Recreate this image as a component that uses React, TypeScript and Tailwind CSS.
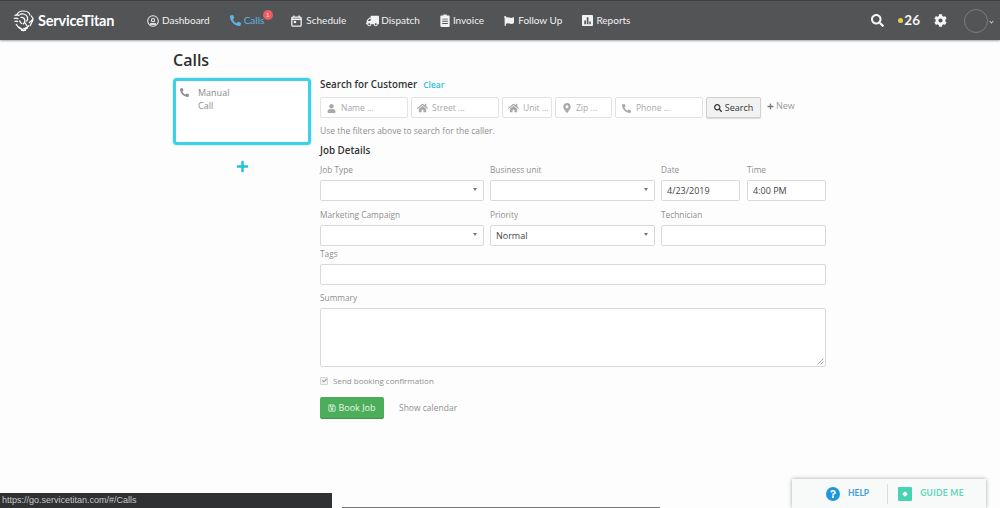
import type { ReactNode } from 'react';
import { FaCog, FaFlag, FaHome, FaMapMarkerAlt, FaPhoneAlt, FaPlus, FaQuestion, FaRegSave, FaSearch, FaTruck, FaUser, FaCheck } from 'react-icons/fa';

function DashIcon() {
  return (
    <svg width="12" height="12" viewBox="0 0 14 14" fill="none" stroke="currentColor" strokeWidth="1.2">
      <circle cx="7" cy="7" r="6.200" />
      <circle cx="7" cy="6" r="1.800" />
      <path d="M3.500 10.500h7" strokeWidth="2" />
    </svg>
  );
}

function CalIcon() {
  return (
    <svg width="11" height="12" viewBox="0 0 12 13" fill="none" stroke="currentColor">
      <rect x="0.900" y="2.200" width="10.200" height="9.900" rx="1" strokeWidth="1.400" />
      <path d="M1 4.600h10" strokeWidth="1.800" />
      <path d="M3.200 0.500v2.200M8.800 0.500v2.200" strokeWidth="1.400" />
      <rect x="3" y="6.400" width="2.600" height="2.400" fill="currentColor" stroke="none" />
    </svg>
  );
}

function InvoiceIcon() {
  return (
    <svg width="10" height="13" viewBox="0 0 10 14">
      <path fill="currentColor" fillRule="evenodd" d="M1 1.600h2.200V.6h3.600v1H9c.5 0 1 .4 1 1V13c0 .5-.5 1-1 1H1c-.5 0-1-.5-1-1V2.600c0-.6.5-1 1-1zM2 5v1h6V5zm0 2.400v1h6v-1zm0 2.400v1h6v-1z" />
    </svg>
  );
}

function ReportsIcon() {
  return (
    <svg width="11" height="11" viewBox="0 0 12 12">
      <path fill="currentColor" fillRule="evenodd" d="M1 0h10c.6 0 1 .4 1 1v10c0 .6-.4 1-1 1H1c-.6 0-1-.4-1-1V1c0-.6.4-1 1-1zm1.500 6v4h1.800V6zm2.700-3.500V10H7V2.500zM7.900 7v3h1.700V7z" />
    </svg>
  );
}

function Logo() {
  return (
    <svg width="21" height="22" viewBox="0 0 21 22" fill="none" stroke="white" strokeWidth="1.200">
      <path d="M3.500 5.500C4.500 2.500 7.500.8 11 1c3.500.2 5.800 2 6 4.500" />
      <path d="M1.500 5.500c1.800-.8 3.500-.7 5 .3M.8 8.500c1.800-.7 3.300-.5 4.500.4M1.500 11.500c1.300-.6 2.500-.5 3.700.3" />
      <path d="M6.500 4.500c2.500-1.200 6-.7 7.500 1.800 1 1.700.7 3.800-.5 5.200" />
      <path d="M7.500 7.500c2-.4 3.800.6 4.300 2.500.4 1.800-.4 3.400-2 4.200" />
      <path d="M6.500 10.500c.4 1.500 1.200 2.600 2.500 3.300" />
      <path d="M18 5.500l2.200 3.500-4.200 4M20 10l-3 6" />
      <path d="M3 14c1.200 2.500 3.300 4.300 6 5.500 2.800-.5 5.500-2 7.200-4" />
      <path d="M6 17l4.500 3.800 4.500-3.300M8 20.500h5" />
      <path d="M12 12.500l2 3.500" />
    </svg>
  );
}

function NavItem({ icon, label, active, badge, gap, className }: { icon: ReactNode; label: string; active?: boolean; badge?: boolean; gap: string; className?: string }) {
  return (
    <div className={`relative flex items-center text-[10px] ${gap} ${active ? 'text-[#5fb4e6]' : 'text-[#f2f2f2]'} ${className ?? ''}`}>
      {icon}
      <span>{label}</span>
      {badge && (
        <span className="absolute left-[33px] top-[-3px] flex h-[10px] w-[10px] items-center justify-center rounded-full bg-[#ef5b5f] text-[6px] leading-none text-white">
          1
        </span>
      )}
    </div>
  );
}

function SearchBox({ icon, label, width }: { icon: ReactNode; label: string; width: string }) {
  return (
    <div className={`flex h-[21px] items-center gap-[4px] whitespace-nowrap rounded-[2px] border border-[#e2e2e2] bg-white pl-[5px] pt-[1px] text-[8.500px] text-[#a8a8a8] ${width}`}>
      <span className="flex w-[11px] justify-center text-[#a9a9a9]">{icon}</span>
      <span>{label}</span>
    </div>
  );
}

function Field({ label, value, select, width, className }: { label: string; value?: string; select?: boolean; width: string; className?: string }) {
  return (
    <div className={`flex flex-col ${width} ${className ?? ''}`}>
      <label className="h-[15px] text-[8.300px] leading-[9px] text-[#8f8f8f]">{label}</label>
      <div className="relative flex h-[21px] items-center rounded-[2px] border border-[#d9d9d9] bg-white pl-[5px] pt-[1px] text-[9px] text-[#444]">
        {value}
        {select && <span className="absolute right-[6px] top-[7px] h-0 w-0 border-x-[2px] border-t-[3px] border-x-transparent border-t-[#777]" />}
      </div>
    </div>
  );
}

export default function App() {
  return (
    <div className="relative h-[508px] w-[1000px] overflow-hidden bg-[#fdfdfd] font-['Open_Sans',sans-serif]">
      <header className="flex h-[40px] items-center border-t border-[#3d3f41] bg-[#525456] pl-[13px] pr-[7px] font-['Lato',sans-serif] shadow-[0_1px_2px_rgba(0,0,0,0.35)]">
        <Logo />
        <span className="ml-[4px] w-[88px] text-[14.500px] font-bold tracking-[-0.2px] text-white">ServiceTitan</span>
        <nav className="ml-[21px] flex items-center gap-[20px]">
          <NavItem icon={<DashIcon />} label="Dashboard" gap="gap-[3px]" />
          <NavItem icon={<FaPhoneAlt className="h-[11px] w-[11px]" />} label="Calls" active badge gap="gap-[3px]" className="mr-[7px]" />
          <NavItem icon={<CalIcon />} label="Schedule" gap="gap-[4px]" />
          <NavItem icon={<FaTruck className="h-[12px] w-[13px] -scale-x-100" />} label="Dispatch" gap="gap-[2px]" />
          <NavItem icon={<InvoiceIcon />} label="Invoice" gap="gap-[3px]" />
          <NavItem icon={<FaFlag className="h-[10px] w-[10px]" />} label="Follow Up" gap="gap-[4px]" />
          <NavItem icon={<ReportsIcon />} label="Reports" gap="gap-[3px]" />
        </nav>
        <div className="ml-auto flex items-center text-[#f5f5f5]">
          <FaSearch className="h-[13px] w-[13px]" />
          <span className="ml-[14px] h-[5px] w-[5px] rounded-full bg-[#e9cf3c]" />
          <span className="ml-[1px] text-[13.500px] font-bold">26</span>
          <FaCog className="ml-[14px] h-[13px] w-[13px]" />
          <span className="ml-[17px] h-[24px] w-[24px] rounded-full border border-[#7a7c7e]" />
          <span className="ml-[2px] mt-[1px] h-[3px] w-[3px] rotate-45 border-b border-r border-[#c8c8c8]" />
        </div>
      </header>

      <main className="ml-[173px] w-[653px]">
        <h1 className="mt-[9px] h-[29px] text-[16px] font-semibold leading-[22px] text-[#2f2f2f]">Calls</h1>
        <div className="flex">
          <aside className="w-[147px] shrink-0">
            <div className="flex h-[67px] w-[138px] gap-[9px] rounded-[4px] border-[3px] border-[#3fd0e6] bg-white pl-[4px] pt-[5px] shadow-[0_0_2px_rgba(63,208,230,0.7)]">
              <FaPhoneAlt className="mt-[2px] h-[9px] w-[9px] text-[#8f8f8f]" />
              <div className="text-[9px] leading-[13px] text-[#8a8a8a]">
                <div>Manual</div>
                <div>Call</div>
              </div>
            </div>
            <div className="ml-[63px] mt-[15px] text-[#22c0dc]">
              <FaPlus className="h-[13px] w-[13px]" />
            </div>
          </aside>

          <section className="w-[506px]">
            <div className="flex h-[19px] items-center gap-[6px] pb-[5px]">
              <h2 className="text-[9.800px] font-semibold text-[#333]">Search for Customer</h2>
              <span className="text-[8.500px] font-semibold text-[#2cbfd6]">Clear</span>
            </div>
            <div className="flex items-center gap-[3px]">
              <SearchBox icon={<FaUser className="h-[9px] w-[9px]" />} label="Name ..." width="w-[88px]" />
              <SearchBox icon={<FaHome className="h-[10px] w-[11px]" />} label="Street ..." width="w-[88px]" />
              <SearchBox icon={<FaHome className="h-[10px] w-[11px]" />} label="Unit ..." width="w-[50px]" />
              <SearchBox icon={<FaMapMarkerAlt className="h-[10px] w-[8px]" />} label="Zip ..." width="w-[57px]" />
              <SearchBox icon={<FaPhoneAlt className="h-[9px] w-[9px]" />} label="Phone ..." width="w-[88px]" />
              <button className="flex h-[21px] w-[55px] items-center justify-center gap-[3px] rounded-[2px] border border-[#cfcfcf] bg-[#f2f2f2] text-[9px] text-[#333] shadow-[0_1px_1px_rgba(0,0,0,0.15)]">
                <FaSearch className="h-[8px] w-[8px]" />
                Search
              </button>
              <span className="ml-[3px] flex items-center gap-[2px] pb-[3px] text-[9px] text-[#999]">
                <FaPlus className="h-[7px] w-[7px] text-[#777]" />
                New
              </span>
            </div>
            <p className="mt-[7px] h-[12px] text-[8.500px] leading-[12px] text-[#8f8f8f]">Use the filters above to search for the caller.</p>
            <h2 className="mt-[7px] h-[14px] text-[9.800px] font-semibold leading-[14px] text-[#333]">Job Details</h2>

            <div className="mt-[7px] flex">
              <Field label="Job Type" select width="w-[164px]" />
              <Field label="Business unit" select width="w-[165px]" className="ml-[6px]" />
              <Field label="Date" value="4/23/2019" width="w-[79px]" className="ml-[6px]" />
              <Field label="Time" value="4:00 PM" width="w-[79px]" className="ml-[7px]" />
            </div>
            <div className="mt-[9px] flex">
              <Field label="Marketing Campaign" select width="w-[164px]" />
              <Field label="Priority" value="Normal" select width="w-[165px]" className="ml-[6px]" />
              <Field label="Technician" width="w-[165px]" className="ml-[6px]" />
            </div>
            <label className="mt-[2px] block h-[16px] text-[8.300px] leading-[11px] text-[#8f8f8f]">Tags</label>
            <div className="h-[21px] rounded-[2px] border border-[#d9d9d9] bg-white" />
            <label className="mt-[8px] block h-[15px] text-[8.300px] leading-[9px] text-[#8f8f8f]">Summary</label>
            <div className="relative h-[59px] rounded-[2px] border border-[#d9d9d9] bg-white">
              <svg className="absolute bottom-[1px] right-[1px]" width="7" height="7" viewBox="0 0 7 7" stroke="#777" strokeWidth="0.700">
                <path d="M0.500 6.500L6.500 0.500M3.500 6.500L6.500 3.500" />
              </svg>
            </div>
            <div className="mt-[8px] flex h-[11px] items-center gap-[5px] text-[8px] text-[#8f8f8f]">
              <span className="flex h-[8px] w-[8px] items-center justify-center rounded-[1px] border border-[#d5d5d5] bg-[#f3f3f3]">
                <FaCheck className="h-[5px] w-[5px] text-[#999]" />
              </span>
              Send booking confirmation
            </div>
            <div className="mt-[11px] flex items-center">
              <button className="flex h-[22px] w-[64px] items-center justify-center gap-[2px] rounded-[2px] bg-[#4cae5a] text-[9px] text-[#eaf6ea] shadow-[inset_0_-1px_0_rgba(0,0,0,0.15)]">
                <FaRegSave className="h-[8px] w-[8px]" />
                Book Job
              </button>
              <span className="ml-[15px] text-[8.500px] text-[#8f8f8f]">Show calendar</span>
            </div>
          </section>
        </div>
      </main>

      <div className="absolute bottom-0 left-0 h-[15px] w-[332px] bg-[#2f3133] pl-[2px] font-['Liberation_Sans',sans-serif] text-[9px] leading-[14px] text-[#c9c9c9]">
        https://go.servicetitan.com/#/Calls
      </div>
      <div className="absolute bottom-0 left-[342px] h-[1px] w-[318px] bg-[#777]" />
      <div className="absolute bottom-0 left-[792px] flex h-[29px] w-[194px] items-center bg-[#f8f9f9] pl-[34px] font-['Lato',sans-serif] shadow-[0_0_4px_rgba(0,0,0,0.35)]">
        <span className="flex h-[14px] w-[14px] items-center justify-center rounded-full bg-[#1f97dc]">
          <FaQuestion className="h-[8px] w-[8px] text-white" />
        </span>
        <span className="ml-[8px] text-[8.500px] font-bold text-[#3f9fd6]">HELP</span>
        <span className="ml-[18px] h-[20px] w-px bg-[#dcdfe0]" />
        <span className="ml-[10px] flex h-[14px] w-[14px] items-center justify-center rounded-[1px] bg-[#47d3b3]">
          <span className="h-[4px] w-[4px] rotate-45 bg-white" />
        </span>
        <span className="ml-[8px] text-[8.500px] font-bold tracking-[0.3px] text-[#5fd6bd]">GUIDE ME</span>
      </div>
    </div>
  );
}
